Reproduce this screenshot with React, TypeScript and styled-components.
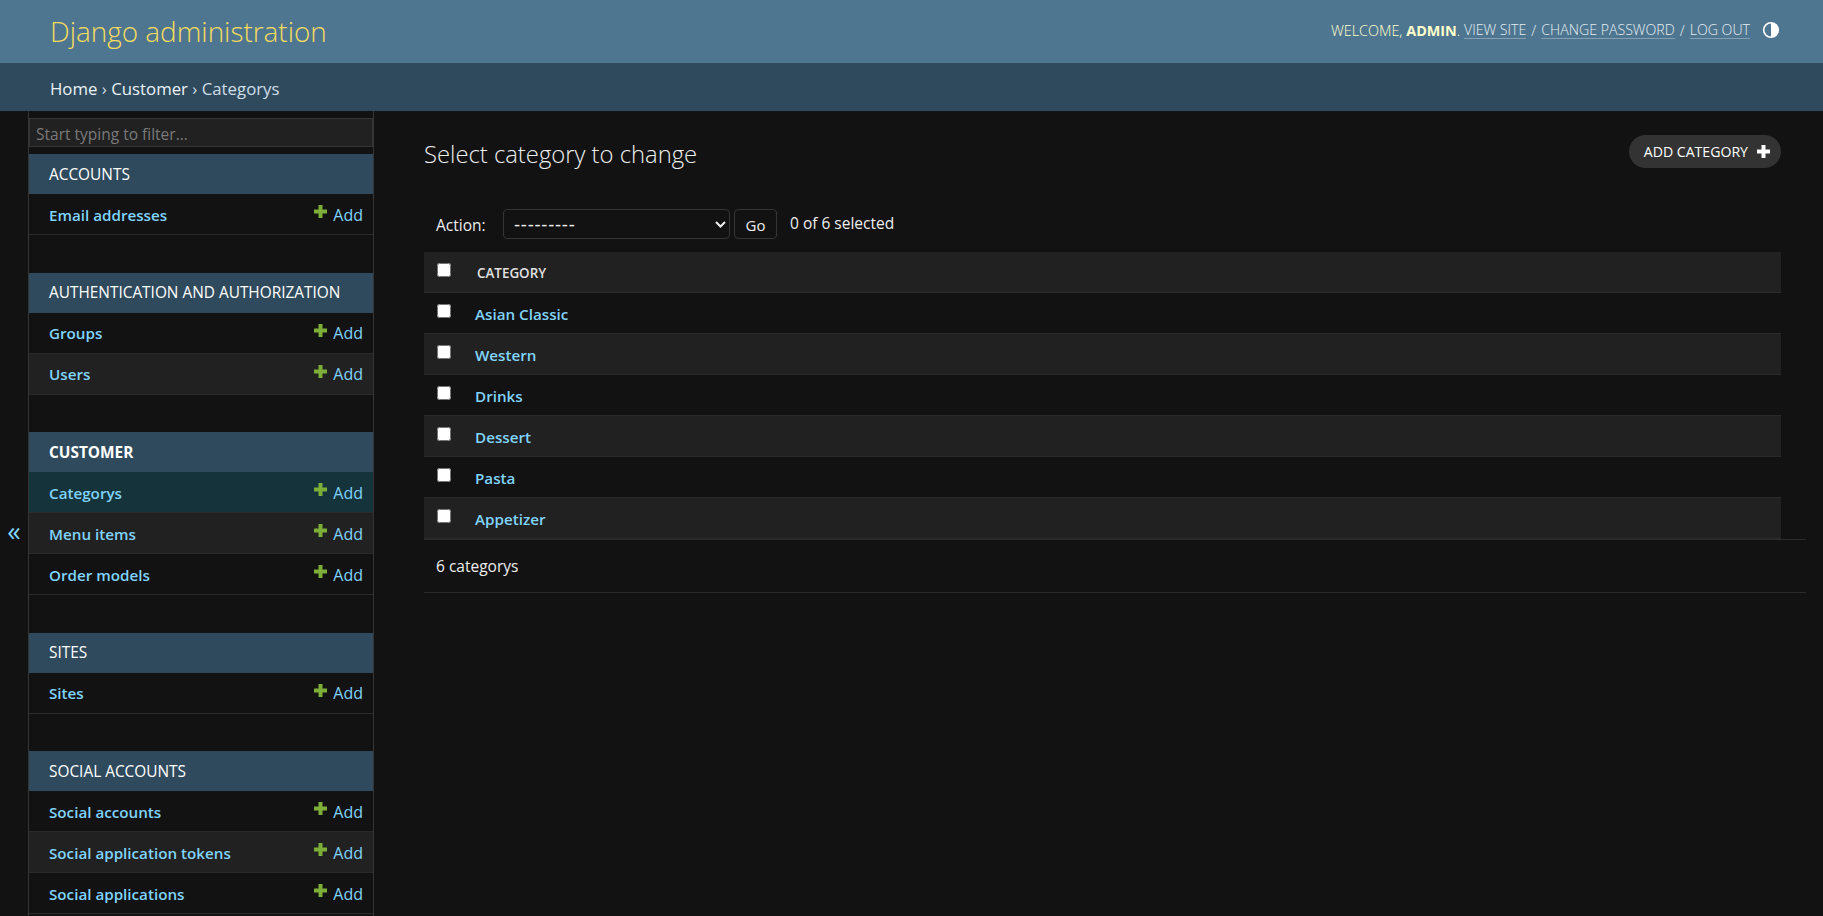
import React from "react";
import styled, { createGlobalStyle } from "styled-components";

const chevron = encodeURIComponent(
  '<svg xmlns="http://www.w3.org/2000/svg" viewBox="0 0 11 7"><path d="M1 1l4.5 4.500L10 1" fill="none" stroke="#eeeeee" stroke-width="2"/></svg>'
);

const Global = createGlobalStyle`
  html, body { margin: 0; padding: 0; height: 916px; overflow: hidden; background: #121212; }
  body { font-family: "Open Sans", "Noto Sans", "Liberation Sans", sans-serif; color: #eeeeee; font-size: 15.5px; }
  * { box-sizing: border-box; }
`;

const Page = styled.div`display: flex; flex-direction: column; height: 916px; overflow: hidden;`;
const Header = styled.header`
  height: 63px; flex: none; background: #4f7690; display: flex; align-items: center;
  justify-content: space-between; padding: 0 43px 0 50px;
`;
const Brand = styled.h1`margin: 0; font-size: 27.9px; font-weight: 300; color: #f5dd5d; line-height: 1;`;
const Tools = styled.div`display: flex; align-items: center; font-size: 14.4px; font-weight: 300; color: #ffffcc; text-transform: uppercase; white-space: pre; margin-top: -3px;`;
const Strong = styled.strong`font-weight: 700;`;
const ToolLink = styled.a`color: #e4eef3; font-size: 14.15px; border-bottom: 1px solid rgba(255,255,255,0.3); line-height: 16px; margin-top: 1px;`;
const Sep = styled.span`color: #e4eef3; margin: 0 1.3px;`;
const ThemeBtn = styled.span`display: flex; margin-left: 12px; width: 18px; height: 18px;`;
const Crumbs = styled.nav`height: 48px; flex: none; background: #2f4a5d; padding: 2px 50px 0; display: flex; align-items: center; font-size: 16.8px; color: #cfdfe8; white-space: pre;`;
const CrumbLink = styled.a`color: #eaf2f6;`;
const Body = styled.div`display: flex; flex: 1; min-height: 0;`;
const Toggle = styled.div`
  width: 29px; flex: none; border-right: 1px solid #353535; display: flex; align-items: center;
  justify-content: center; color: #81d4fa; font-size: 27px; padding-top: 33px; line-height: 1;
`;
const Side = styled.aside`width: 345px; flex: none; border-right: 1px solid #353535; padding-top: 7px; overflow: hidden;`;
const Filter = styled.input`
  display: block; width: 344px; height: 29px; margin: 0 0 7px; background: #212121; border: 1px solid #353535;
  padding: 2px 6px 0; font: inherit; font-size: 15.5px; color: #eee;
  &::placeholder { color: #7a7a7a; opacity: 1; }
`;
const Module = styled.section`margin-bottom: 37.6px;`;
const Caption = styled.div<{ $active?: boolean }>`
  height: 40px; background: #2f4a5d; color: #fff; display: flex; align-items: center; padding-left: 20px;
  font-size: 15.4px; text-transform: uppercase; font-weight: ${(p) => (p.$active ? 700 : 400)};
`;
const Row = styled.div<{ $alt?: boolean; $current?: boolean }>`
  height: 41px; display: flex; align-items: center; justify-content: space-between; padding: 1px 10px 0 20px;
  border-bottom: 1px solid #2a2a2a;
  background: ${(p) => (p.$current ? "#15333a" : p.$alt ? "#212121" : "#121212")};
`;
const ModelLink = styled.a`color: #81d4fa; font-weight: 600; font-size: 15.2px;`;
const AddLink = styled.a`color: #81d4fa; font-size: 16px; display: flex; align-items: center; gap: 6px;`;
const PlusIcon = styled.svg<{ $raised?: boolean }>`width: 13px; height: 13px; margin-top: ${(p) => (p.$raised ? "-6px" : "0")};`;
const Main = styled.main`flex: 1; min-width: 0; padding: 24px 17px 0 50px; position: relative;`;
const TitleBar = styled.div`display: flex; justify-content: space-between; align-items: flex-start; padding-right: 25px; height: 58px;`;
const Title = styled.h2`margin: 0; font-size: 23.8px; font-weight: 300; color: #eeeeee; line-height: 38px;`;
const AddBtn = styled.a`
  height: 33px; border-radius: 16.5px; background: #333333; color: #fff; display: flex; align-items: center;
  gap: 9px; padding: 0 11px 0 15px; font-size: 14.1px; text-transform: uppercase;
`;
const Actions = styled.div`display: flex; align-items: center; margin: 16px 25px 0 0; height: 30px; padding-left: 12px;`;
const ActLabel = styled.label`width: 67px; flex: none; margin-top: 2px;`;
const ActSelect = styled.select`
  appearance: none; width: 227px; height: 30px; color: #eee; border: 1px solid #353535; border-radius: 4px;
  padding: 0 6px 0 10px; font-family: "DejaVu Sans", sans-serif; font-size: 17px; letter-spacing: 0.7px;
  background: #121212 url("data:image/svg+xml,${chevron}") no-repeat right 3px center / 11px 7px;
`;
const GoBtn = styled.button`
  width: 43px; height: 30px; margin-left: 4px; background: #121212; color: #eee; border: 1px solid #353535; border-radius: 4px;
  font: inherit; font-size: 15px; padding: 2px 0 0;
`;
const Count = styled.span`margin-left: 13px; margin-top: -3px;`;
const Table = styled.div`margin: 13px 25px 0 0; display: flex; flex-direction: column;`;
const THead = styled.div`height: 41px; background: #212121; display: flex; align-items: center; border-bottom: 1px solid #2a2a2a; font-size: 13.4px; font-weight: 600; color: #e0e0e0;`;
const TRow = styled.div<{ $alt?: boolean }>`
  height: 41px; display: flex; align-items: center; border-bottom: 1px solid #2a2a2a;
  background: ${(p) => (p.$alt ? "#212121" : "#121212")};
`;
const Check = styled.input`width: 14px; height: 14px; margin: -5px 0 0 13px; flex: none;`;
const HeadLabel = styled.span`margin-left: 26px; padding-top: 1px;`;
const RowLink = styled.a`margin-left: 24px; padding-top: 2px; color: #81d4fa; font-weight: 600; font-size: 15.2px;`;
const Footer = styled.div`height: 54px; border-top: 1px solid #2a2a2a; border-bottom: 1px solid #2a2a2a; padding-left: 12px; display: flex; align-items: center;`;

const Plus = ({ color = "#7cae38", raised = false }: { color?: string; raised?: boolean }) => (
  <PlusIcon $raised={raised} viewBox="0 0 13 13"><path fill={color} d="M4.500 0h4v4.500H13v4H8.500V13h-4V8.500H0v-4h4.500z" /></PlusIcon>
);

const modules: { name: string; active?: boolean; rows: string[] }[] = [
  { name: "Accounts", rows: ["Email addresses"] },
  { name: "Authentication and Authorization", rows: ["Groups", "Users"] },
  { name: "Customer", active: true, rows: ["Categorys", "Menu items", "Order models"] },
  { name: "Sites", rows: ["Sites"] },
  { name: "Social Accounts", rows: ["Social accounts", "Social application tokens", "Social applications"] },
];
const cats = ["Asian Classic", "Western", "Drinks", "Dessert", "Pasta", "Appetizer"];

export default function App() {
  return (
    <Page>
      <Global />
      <Header>
        <Brand>Django administration</Brand>
        <Tools>
          Welcome, <Strong>Admin</Strong>. <ToolLink>View site</ToolLink><Sep> / </Sep><ToolLink>Change password</ToolLink><Sep> / </Sep><ToolLink>Log out</ToolLink>
          <ThemeBtn>
            <svg viewBox="0 0 18 18" width="18" height="18">
              <circle cx="9" cy="9" r="7.3" fill="none" stroke="#fff" strokeWidth="1.6" />
              <path d="M9 1.700a7.300 7.300 0 0 1 0 14.600z" fill="#fff" />
            </svg>
          </ThemeBtn>
        </Tools>
      </Header>
      <Crumbs>
        <CrumbLink>Home</CrumbLink> › <CrumbLink>Customer</CrumbLink> › Categorys
      </Crumbs>
      <Body>
        <Toggle>«</Toggle>
        <Side>
          <Filter placeholder="Start typing to filter..." />
          {modules.map((m) => (
            <Module key={m.name}>
              <Caption $active={m.active}>{m.name}</Caption>
              {m.rows.map((r, i) => (
                <Row key={r} $alt={i % 2 === 1} $current={r === "Categorys"}>
                  <ModelLink>{r}</ModelLink>
                  <AddLink><Plus raised />Add</AddLink>
                </Row>
              ))}
            </Module>
          ))}
        </Side>
        <Main>
          <TitleBar>
            <Title>Select category to change</Title>
            <AddBtn>Add category <Plus color="#ffffff" /></AddBtn>
          </TitleBar>
          <Actions>
            <ActLabel>Action:</ActLabel>
            <ActSelect defaultValue=""><option value="">---------</option></ActSelect>
            <GoBtn>Go</GoBtn>
            <Count>0 of 6 selected</Count>
          </Actions>
          <Table>
            <THead><Check type="checkbox" /><HeadLabel>CATEGORY</HeadLabel></THead>
            {cats.map((c, i) => (
              <TRow key={c} $alt={i % 2 === 1}><Check type="checkbox" /><RowLink>{c}</RowLink></TRow>
            ))}
          </Table>
          <Footer>6 categorys</Footer>
        </Main>
      </Body>
    </Page>
  );
}
